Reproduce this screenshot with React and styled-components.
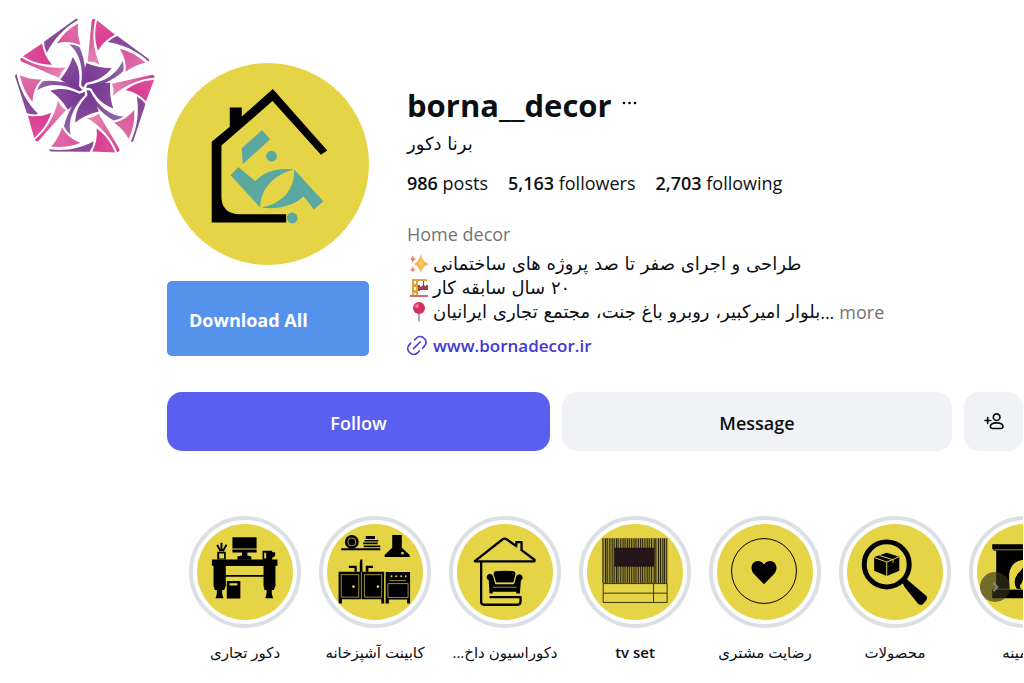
import React from 'react'
import styled, { createGlobalStyle } from 'styled-components'

const GlobalStyle = createGlobalStyle`
  * {
    box-sizing: border-box;
  }
  body {
    margin: 0;
    background: #ffffff;
    color: #0c1014;
    font-family: 'Open Sans', 'Noto Sans', 'DejaVu Sans', sans-serif;
    font-size: 18px;
    line-height: 24px;
    overflow-x: hidden;
  }
  button {
    border: 0;
    padding: 0;
    background: none;
    color: inherit;
    font: inherit;
    cursor: pointer;
  }
`

const petals = [0, 72, 144, 216, 288]

const BrandLogo = () => (
  <svg viewBox="40 54 426 408" width="142" height="136" role="img" aria-label="logo">
    <defs>
      <linearGradient id="sliver" gradientUnits="userSpaceOnUse" x1="280" y1="57" x2="270" y2="190">
        <stop offset="0" stopColor="#d2408c" />
        <stop offset="1" stopColor="#e586b5" />
      </linearGradient>
      <linearGradient id="wedge" gradientUnits="userSpaceOnUse" x1="290" y1="70" x2="320" y2="140">
        <stop offset="0" stopColor="#dd4f9a" />
        <stop offset="1" stopColor="#d8398f" />
      </linearGradient>
      <linearGradient id="edge" gradientUnits="userSpaceOnUse" x1="322" y1="120" x2="447" y2="182">
        <stop offset="0" stopColor="#8a489e" />
        <stop offset="1" stopColor="#7f5290" />
      </linearGradient>
      <linearGradient id="fin" gradientUnits="userSpaceOnUse" x1="358" y1="150" x2="420" y2="200">
        <stop offset="0" stopColor="#dc559d" />
        <stop offset="1" stopColor="#dd6ea8" />
      </linearGradient>
      <linearGradient id="tail" gradientUnits="userSpaceOnUse" x1="368" y1="185" x2="270" y2="252">
        <stop offset="0" stopColor="#9468a8" />
        <stop offset="1" stopColor="#783c97" />
      </linearGradient>
      <linearGradient id="core" gradientUnits="userSpaceOnUse" x1="310" y1="195" x2="250" y2="262">
        <stop offset="0" stopColor="#874a9d" />
        <stop offset="1" stopColor="#713593" />
      </linearGradient>
    </defs>
    {petals.map((angle) => (
      <g key={angle} transform={`rotate(${angle} 252 268)`}>
        <path fill="url(#sliver)" d="M273 62Q274 57 279 57L284 58C274 96 276 146 297 194Q280 183 261 185Z" />
        <path fill="url(#wedge)" d="M289 61L343 104Q309 121 292 152C281 120 282 90 289 61Z" />
        <path fill="url(#edge)" d="M321 126Q334 113 350 108L443 176Q448 180 444 185C406 150 365 133 321 126Z" />
        <path fill="url(#fin)" d="M357 146Q402 157 434 188Q400 196 375 215Q378 177 357 146Z" />
        <path fill="url(#tail)" d="M260 254C315 245 350 220 366 182Q371 197 368 214Q345 236 300 255Q275 263 257 264Z" />
        <path fill="url(#core)" d="M257 189Q295 205 333 204C315 229 290 243 257 248L246 262L248 222Z" />
      </g>
    ))}
    <circle cx="252" cy="270" r="5" fill="#fff" />
  </svg>
)

const AvatarArt = () => (
  <svg viewBox="22 24 605 605" width="100%" height="100%" aria-hidden="true">
    <path fill="#000" d="M156 502V260L210 215V157H246V184L339 102L502 286L483 299L338 138L185 271V428Q188 473 235 477H379V502Z" />
    <g fill="#5ba8a0">
      <path d="M307 225L331 252L249 327L246 279Z" />
      <circle cx="335" cy="303" r="16" />
      <path d="M236 336L287 378Q325 335 403 343C350 355 302 395 301 457L213 360Z" />
      <path d="M236 336L288 394L270 420L213 360Z" />
      <path d="M403 343L490 438L462 463L431 423C400 454 350 463 304 457C365 446 405 405 403 343Z" />
      <circle cx="397" cy="488" r="16" />
    </g>
  </svg>
)

const DeskArt = () => (
  <g>
    <path d="M155 93H228V127H155ZM155 130H228V139H155ZM184 139H200V148L212 151V161H170V151L184 148Z" />
    <path d="M109 137H135V160H109ZM246 134H275V138H284V150L275 155V162H246Z" />
    <path d="M109 116L119 135M122 110V135M137 116L126 135" stroke="#000" strokeWidth="6" />
    <path d="M93 160H291V179H285V240L280 252H252L249 240V180H135V240L130 252H102L98 240V179H93Z" />
    <path d="M134 207H250V212H134ZM108 250H124V264L128 277H104L108 264ZM258 250H274V264L278 277H254L258 264Z" />
    <path d="M138 225H179V278H138Z" />
    <path d="M146 232H170V239H146ZM115 142H130V157H115ZM251 140H257V157H251Z" fill="#e4d446" />
  </g>
)

const KitchenArt = () => (
  <g>
    <circle cx="514" cy="107" r="21" />
    <circle cx="514" cy="107" r="12" fill="none" stroke="#a89b38" strokeWidth="3" />
    <path d="M482 126H600V132H482ZM556 89H584V98H556ZM552 101H594V106H552ZM548 109H592V114H548ZM550 118H600V123H550ZM636 86H665V125L689 147V153H613V147L636 125Z" />
    <circle cx="667" cy="141" r="4" fill="#e4d446" />
    <path d="M540 160H546V198H538V170ZM505 179H529V197H522V186H505ZM556 179H578V186H564V197H556Z" />
    <path d="M474 197H612V293H603V280H484V293H474ZM616 198H690V293H681V281H626V293H616Z" />
    <g fill="none" stroke="#e4d446" strokeWidth="2">
      <path d="M482 206H535V274H482ZM552 206H604V274H552ZM543 198V290M613 198V285M623 233H684V275H623ZM628 224H678" />
    </g>
    <g fill="#e4d446">
      <circle cx="519" cy="242" r="4" />
      <circle cx="593" cy="242" r="4" />
      <circle cx="634" cy="211" r="3" />
      <circle cx="648" cy="211" r="3" />
      <circle cx="663" cy="211" r="3" />
      <circle cx="677" cy="211" r="3" />
    </g>
  </g>
)

const HouseArt = () => (
  <g>
    <path
      fill="none"
      stroke="#000"
      strokeWidth="7"
      strokeLinejoin="round"
      strokeLinecap="round"
      d="M104 165L188 99Q194 95 200 99L229 120V108H245V132L284 161Q286 166 280 166H106ZM123 168V289Q123 297 131 297H232Q242 296 242 286V274H151"
    />
    <path d="M165 196Q194 192 222 196Q228 199 226 207L220 230H168L161 207Q160 199 165 196Z" />
    <path d="M141 208Q150 197 159 210L166 235H222L229 210Q241 199 248 212Q250 219 243 224L240 263H229V258H158V263H148L146 224Q137 219 141 208Z" />
    <path d="M160 209L167 232H222L228 209" fill="none" stroke="#e4d446" strokeWidth="2" />
    <path d="M159 244H230" stroke="#e4d446" strokeWidth="2" />
  </g>
)

const slats = [488, 496, 501, 509, 516, 522, 529, 534, 542, 549, 555, 562, 568, 575, 582, 588, 595, 602, 608, 615, 622, 628, 635, 643, 648, 656, 662, 669, 674, 681]

const TvArt = () => (
  <g>
    <path fill="#a3963a" d="M487 96H682V232H487Z" />
    {slats.map((x) => (
      <path key={x} d={`M${x} 96V232`} stroke="#272108" strokeWidth="3" />
    ))}
    <path fill="#241318" d="M523 125H643V182H523Z" />
    <path fill="none" stroke="#3b3213" strokeWidth="3" d="M489 233H682V290H489ZM489 262H682M641 233V290" />
  </g>
)

const HeartArt = () => (
  <g>
    <circle cx="194" cy="195" r="98" fill="none" stroke="#000" strokeWidth="3" />
    <path d="M194 235L163 203C150 188 157 165 176 165Q188 165 194 176Q200 165 213 165C231 166 238 188 225 203Z" />
  </g>
)

const SearchBoxArt = () => (
  <g>
    <circle cx="563" cy="175" r="68" fill="none" stroke="#000" strokeWidth="15" />
    <path d="M610 230L622 218L634 229L682 270Q688 276 682 284L671 296Q663 300 657 293L617 243Z" />
    <path d="M525 153L563 140L601 152V194L563 210L525 194Z" />
    <path d="M525 154L563 168L601 152M563 168V210M541 148L582 161V170" fill="none" stroke="#e4d446" strokeWidth="3" />
  </g>
)

const FireplaceArt = () => (
  <g>
    <path d="M879 114H1078V128L1070 134H1064V250H1080V277H879V250H891V134H885L879 128Z" />
    <path fill="#e4d446" d="M930 250V205Q935 163 979 160Q1024 163 1028 205V250Z" />
    <path d="M979 167Q974 188 957 202Q938 226 954 250H1006Q1020 229 1003 208Q998 218 991 216Q995 188 979 167Z" />
    <path fill="#e4d446" d="M973 212Q972 228 963 238Q962 247 968 250H988Q992 238 980 230Z" />
    <path d="M885 131H1070M885 250H1075" stroke="#e4d446" strokeWidth="2" />
  </g>
)

const highlights = [
  { label: 'دکور تجاری', left: 48, art: DeskArt },
  { label: 'کابینت آشپزخانه', left: 439, art: KitchenArt },
  { label: 'دکوراسیون داخ...', left: 50, art: HouseArt },
  { label: 'tv set', left: 440, art: TvArt, latin: true },
  { label: 'رضایت مشتری', left: 52, art: HeartArt },
  { label: 'محصولات', left: 443, art: SearchBoxArt },
  { label: 'شومینه', left: 833, art: FireplaceArt },
]

const SparklesIcon = () => (
  <svg viewBox="0 0 20 20" width="20" height="20" role="img" aria-label="sparkles">
    <path fill="#f5ac45" d="M12 0Q13 8 20 10Q13 12 12 19Q10 12 5 10Q10 8 12 0Z" />
    <path fill="#fbc45c" d="M12 3Q13 9 17 10Q13 11 12 16Q11 11 7 10Q11 9 12 3Z" />
    <path fill="#ee8272" d="M4 1Q4 4 7 5Q4 6 4 9Q3 6 1 5Q3 4 4 1ZM4 12Q4 15 7 16Q4 16 4 19Q3 16 1 16Q3 15 4 12Z" />
  </svg>
)

const CraneIcon = () => (
  <svg viewBox="0 0 20 20" width="20" height="20" role="img" aria-label="construction">
    <path fill="none" stroke="#d9a83c" strokeWidth="2" d="M4 18V2H18M8 18V2M4 6L8 9M8 6L4 9M4 12L8 15M8 12L4 15" />
    <path fill="#a53c4c" d="M14 3H15V7L19 10V12H10V10L14 7ZM9 7H11V13H9ZM17 7H19V12H17Z" />
    <path fill="#d66a6d" d="M1 17H19V19H1Z" />
  </svg>
)

const PinIcon = () => (
  <svg viewBox="0 0 20 20" width="20" height="20" role="img" aria-label="location">
    <path fill="#a9adb5" d="M9 10H11V19L10 20L9 19Z" />
    <circle cx="10" cy="6" r="6" fill="#d3315f" />
    <circle cx="8" cy="4" r="2" fill="#ee7398" />
  </svg>
)

const LinkIcon = () => (
  <svg viewBox="0 0 20 20" width="20" height="20" fill="none" stroke="#4a42d0" strokeWidth="1.7" strokeLinecap="round" overflow="visible" aria-hidden="true">
    <path d="M7.5 4L9.5 2C14.5-2.5 22 4.5 17.5 10L15.5 12.2M3.7 7.2L2.3 8.7C-2.5 14 5 21.5 10.3 17L12.3 15M6.5 12.7L13.2 6" />
  </svg>
)

const AddUserIcon = () => (
  <svg viewBox="0 0 60 50" width="20" height="17" fill="none" stroke="#0c1014" strokeWidth="5" strokeLinecap="round" aria-hidden="true">
    <circle cx="38" cy="12" r="10" />
    <path d="M38 29C26 29 19 34 19 41Q20 46 26 46H50Q56 46 57 41C57 34 50 29 38 29ZM3 22H20M11 13V31" />
  </svg>
)

const App = () => {
  return (
    <>
      <GlobalStyle />
      <Page>
        <Brand>
          <BrandLogo />
        </Brand>
        <Main>
          <ProfileHeader>
            <AvatarColumn>
              <Avatar>
                <AvatarArt />
              </Avatar>
              <DownloadButton type="button">Download All</DownloadButton>
            </AvatarColumn>
            <Info>
              <NameRow>
                <UserName>borna__decor</UserName>
                <DotsButton type="button" aria-label="Options">
                  <svg viewBox="0 0 15 4" width="15" height="4" aria-hidden="true">
                    <circle cx="2" cy="2" r="1.3" />
                    <circle cx="7.5" cy="2" r="1.3" />
                    <circle cx="13" cy="2" r="1.3" />
                  </svg>
                </DotsButton>
              </NameRow>
              <FullName>
                <Persian dir="rtl">برنا دکور</Persian>
              </FullName>
              <Stats>
                <li><b>986</b> posts</li>
                <li><b>5,163</b> followers</li>
                <li><b>2,703</b> following</li>
              </Stats>
              <Category>Home decor</Category>
              <BioLine>
                <SparklesIcon />
                <Persian dir="rtl">طراحی و اجرای صفر تا صد پروژه های ساختمانی</Persian>
              </BioLine>
              <BioLine>
                <CraneIcon />
                <Persian dir="rtl">۲۰ سال سابقه کار</Persian>
              </BioLine>
              <BioLine>
                <PinIcon />
                <Persian dir="rtl">بلوار امیرکبیر، روبرو باغ جنت، مجتمع تجاری ایرانیان</Persian>
                <span>...</span>
                <MoreButton type="button">more</MoreButton>
              </BioLine>
              <SiteLink href="#site">
                <LinkIcon />
                www.bornadecor.ir
              </SiteLink>
            </Info>
          </ProfileHeader>

          <Actions>
            <ActionButton type="button" $primary>Follow</ActionButton>
            <ActionButton type="button">Message</ActionButton>
            <SquareButton type="button" aria-label="Similar accounts">
              <AddUserIcon />
            </SquareButton>
          </Actions>

          <Highlights>
            <HighlightList>
              {highlights.map(({ label, left, art: Art, latin }) => (
                <li key={label}>
                  <Highlight type="button">
                    <Ring>
                      <svg viewBox={`${left} 53 290 290`} width="96" height="96" aria-hidden="true">
                        <Art />
                      </svg>
                    </Ring>
                    <HighlightLabel dir="auto" $latin={latin}>{label}</HighlightLabel>
                  </Highlight>
                </li>
              ))}
            </HighlightList>
            <NextButton type="button" aria-label="Next">
              <svg viewBox="0 0 12 12" width="10" height="10" fill="none" stroke="#8a8a80" strokeWidth="2" aria-hidden="true">
                <path d="M4 1L9 6L4 11" />
              </svg>
            </NextButton>
          </Highlights>
        </Main>
      </Page>
    </>
  )
}

const Page = styled.div`
  display: grid;
  grid-template-columns: 153px minmax(0, 1fr);
  padding: 18px 1px 16px 14px;
`
const Brand = styled.div`
  svg {
    display: block;
  }
`
const Main = styled.main`
  padding-top: 45px;
`
const ProfileHeader = styled.header`
  display: flex;
  gap: 38px;
`
const AvatarColumn = styled.div`
  flex: none;
  width: 202px;
`
const Avatar = styled.div`
  height: 202px;
  border-radius: 50%;
  background: #e4d446;
`
const DownloadButton = styled.button`
  width: 100%;
  height: 75px;
  margin-top: 16px;
  padding: 2px 22px 0;
  border-radius: 5px;
  background: #5592ec;
  color: #ffffff;
  font-weight: 700;
  text-align: left;
`
const Info = styled.div`
  flex: 1;
  min-width: 0;
  padding-top: 22px;
`
const NameRow = styled.div`
  display: flex;
  align-items: center;
  gap: 10px;
`
const UserName = styled.h1`
  margin: 0;
  font-size: 31px;
  line-height: 40px;
  font-weight: 700;
`
const DotsButton = styled.button`
  display: flex;
  padding-bottom: 4px;
`
const Persian = styled.span`
  font-family: 'DejaVu Sans', sans-serif;
  font-size: 18px;
  white-space: nowrap;
`
const FullName = styled.div`
  margin-top: 6px;
`
const Stats = styled.ul`
  display: flex;
  gap: 20px;
  margin: 15px 0 27px;
  padding: 0;
  list-style: none;

  b {
    font-weight: 600;
  }
`
const Category = styled.div`
  margin-bottom: 6px;
  color: #737373;
`
const BioLine = styled.div`
  display: flex;
  align-items: center;
  height: 24px;
  white-space: nowrap;

  svg {
    flex: none;
    margin: 0 4px 0 2px;
  }
`
const MoreButton = styled.button`
  margin-left: 5px;
  color: #737373;
`
const SiteLink = styled.a`
  display: flex;
  align-items: center;
  gap: 6px;
  width: fit-content;
  margin-top: 10px;
  color: #4338d0;
  font-size: 17px;
  font-weight: 600;
  text-decoration: none;
`
const Actions = styled.div`
  display: flex;
  gap: 12px;
  margin-top: 34px;
`
const ActionButton = styled.button`
  flex: ${(p) => (p.$primary ? '383 1 0' : '390 1 0')};
  height: 59px;
  padding-top: 2px;
  border-radius: 15px;
  background: ${(p) => (p.$primary ? '#5b5ff0' : '#f0f2f5')};
  color: ${(p) => (p.$primary ? '#ffffff' : '#0c1014')};
  font-weight: 600;
`
const SquareButton = styled.button`
  display: flex;
  align-items: center;
  justify-content: center;
  flex: none;
  width: 59px;
  height: 59px;
  border-radius: 15px;
  background: #f0f2f5;
`
const Highlights = styled.section`
  position: relative;
  margin-top: 65px;
`
const HighlightList = styled.ul`
  display: flex;
  gap: 18px;
  margin: 0;
  padding: 0 0 0 22px;
  list-style: none;
  overflow: hidden;
`
const Highlight = styled.button`
  display: flex;
  flex-direction: column;
  align-items: center;
  width: 112px;
`
const Ring = styled.span`
  display: flex;
  padding: 4px;
  border: 4px solid #dcdfe4;
  border-radius: 50%;

  svg {
    border-radius: 50%;
    background: #e4d446;
  }
`
const HighlightLabel = styled.span`
  margin-top: 12px;
  font-family: 'Open Sans', 'DejaVu Sans', sans-serif;
  font-size: 15px;
  font-weight: ${(p) => (p.$latin ? 600 : 400)};
  white-space: nowrap;
`
const NextButton = styled.button`
  position: absolute;
  top: 56px;
  right: 13px;
  display: flex;
  align-items: center;
  justify-content: center;
  width: 30px;
  height: 30px;
  border-radius: 50%;
  background: rgba(52, 50, 28, 0.65);
`

export default App
